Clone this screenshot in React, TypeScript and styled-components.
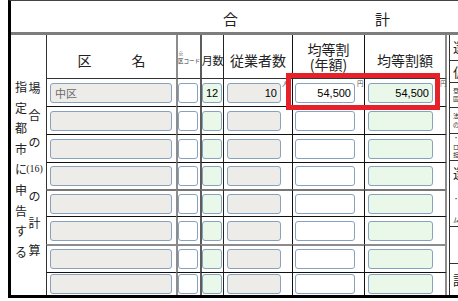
import React from "react";
import styled, { createGlobalStyle } from "styled-components";

const CJK = `"Noto Sans CJK JP", "Noto Sans", sans-serif`;
const NUM = `"Liberation Sans", "Noto Sans CJK JP", sans-serif`;

const GlobalStyle = createGlobalStyle`
  html, body {
    margin: 0;
    padding: 0;
    background: #fff;
    overflow: hidden;
  }
  body {
    font-family: ${CJK};
    color: #222;
  }
  * {
    box-sizing: border-box;
  }
`;

type Fill = "gray" | "white" | "green";

const fills: Record<Fill, string> = {
  gray: "#edece9",
  white: "#ffffff",
  green: "#e9f8e9",
};

// vertical rules, one per column of the table (left column excluded)
const columns = [
  { key: "name", left: "1px solid #333", pad: 3, width: 122, fill: "gray" as Fill },
  { key: "code", left: "2px solid #8c8c8c", pad: 0, width: 20, fill: "white" as Fill },
  { key: "month", left: "2px solid #5c5c5c", pad: 0, width: 20, fill: "green" as Fill },
  { key: "emp", left: "1px solid #222", pad: 3, width: 54, fill: "gray" as Fill },
  { key: "kintou", left: "1px solid #111", pad: 2, width: 60, fill: "white" as Fill },
  { key: "gaku", left: "1px solid #111", pad: 3, width: 65, fill: "green" as Fill },
];

const rowLines = [
  "1px solid #333",
  "1px solid #111",
  "1px solid #111",
  "1px solid #111",
  "2px solid #777",
  "1px solid #111",
  "2px solid #8c8c8c",
  "1px solid #111",
];

const firstRow: Record<string, string> = {
  name: "中区",
  code: "",
  month: "12",
  emp: "10",
  kintou: "54,500",
  gaku: "54,500",
};

const units: Record<string, { text: string; gap: number }> = {
  emp: { text: "人", gap: 1 },
  kintou: { text: "円", gap: 2 },
  gaku: { text: "円", gap: 7 },
};

export default function App() {
  return (
    <Page>
      <GlobalStyle />
      <Frame>
        <TitleRow>
          <span>合</span>
          <span>計</span>
        </TitleRow>
        <Body>
          <Grid>
            <Lead>
              <LeadMain>
                {"指定都市に申告する".split("").map((c, i) => (
                  <span key={i}>{c}</span>
                ))}
              </LeadMain>
              <LeadSub>
                <span>場</span>
                <span>合</span>
                <span>の</span>
                <LeadSmall>(16)</LeadSmall>
                <span>の</span>
                <span>計</span>
                <span>算</span>
              </LeadSub>
            </Lead>

            <HeadCell $left={columns[0].left}>
              <NameHead>
                <span>区</span>
                <span>名</span>
              </NameHead>
            </HeadCell>
            <HeadCell $left={columns[1].left}>
              <CodeHead>
                <span>※</span>
                <span>区コード</span>
              </CodeHead>
            </HeadCell>
            <HeadCell $left={columns[2].left}>
              <MonthHead>月数</MonthHead>
            </HeadCell>
            <HeadCell $left={columns[3].left}>従業者数</HeadCell>
            <HeadCell $left={columns[4].left} $twoLines>
              <HeadLine>均等割</HeadLine>
              <HeadLine>(年額)</HeadLine>
            </HeadCell>
            <HeadCell $left={columns[5].left} $right="2px solid #8c8c8c">
              均等割額
            </HeadCell>

            {rowLines.map((top, r) =>
              columns.map((col) => {
                const value = r === 0 ? firstRow[col.key] : "";
                const unit = r === 0 ? units[col.key] : undefined;
                return (
                  <Cell
                    key={`${r}-${col.key}`}
                    $left={col.left}
                    $top={top}
                    $pad={col.pad}
                    $right={col.key === "gaku" ? "2px solid #8c8c8c" : undefined}
                  >
                    {col.key === "name" ? (
                      <NameField readOnly value={value} $w={col.width} $fill={col.fill} />
                    ) : (
                      <Field readOnly value={value} $w={col.width} $fill={col.fill} />
                    )}
                    {unit && <Unit $gap={unit.gap}>{unit.text}</Unit>}
                  </Cell>
                );
              })
            )}
          </Grid>

          <Side>
            <SideCell $first $top>還付</SideCell>
            <SideCell>仮装</SideCell>
            <SideCell $small>
              <span>登録</span>
              <span>固定</span>
            </SideCell>
            <SideCell $small>
              <span>法人</span>
              <span>の</span>
            </SideCell>
            <SideCell $small>
              <span>・</span>
              <span>ロ</span>
              <span>担</span>
            </SideCell>
            <SideCell $top>
              <span>還</span>
              <SideTiny>・</SideTiny>
              <SideTiny>ム</SideTiny>
            </SideCell>
            <SideCell />
            <SideCell>計</SideCell>
          </Side>
        </Body>
      </Frame>
      <Highlight />
    </Page>
  );
}

const Page = styled.div`
  position: relative;
  width: 458px;
  height: 301px;
  overflow: hidden;
`;

const Frame = styled.div`
  margin-left: 8px;
  width: 470px;
  border-top: 1px solid #444;
  border-left: 3px solid #000;
  border-bottom: 3px solid #000;
`;

const TitleRow = styled.div`
  height: 34px;
  display: flex;
  align-items: center;
  gap: 137px;
  padding: 3px 0 0 212px;
  border-bottom: 3px solid #7d7d7d;
  font-size: 15px;
  line-height: 15px;
  color: #222;
`;

const Body = styled.div`
  display: flex;
  height: 260px;
`;

const Grid = styled.div`
  display: grid;
  width: 436px;
  grid-template-columns: 35px 130px 24px 23px 69px 72px 83px;
  grid-template-rows: 43px 28px 28px 28px 27px 27px 28px 28px 23px;
`;

const Lead = styled.div`
  grid-row: 1 / -1;
  grid-column: 1;
  display: flex;
  align-items: flex-start;
  padding: 42px 0 0 4px;
  font-size: 12px;
  color: #222;
`;

const LeadMain = styled.div`
  display: flex;
  flex-direction: column;
  width: 12px;
  line-height: 20.6px;
  text-align: center;
`;

const LeadSub = styled.div`
  display: flex;
  flex-direction: column;
  justify-content: space-between;
  align-items: center;
  width: 13px;
  height: 178px;
  margin: 3px 0 0 1px;
  line-height: 16px;
`;

const LeadSmall = styled.span`
  font-family: "Liberation Serif", serif;
  font-size: 10px;
  white-space: nowrap;
`;

const HeadCell = styled.div<{ $left: string; $right?: string; $twoLines?: boolean }>`
  display: flex;
  flex-direction: ${(p) => (p.$twoLines ? "column" : "row")};
  align-items: center;
  justify-content: center;
  padding-top: ${(p) => (p.$twoLines ? 0 : 6)}px;
  border-left: ${(p) => p.$left};
  border-right: ${(p) => p.$right ?? "none"};
  font-size: 14px;
  line-height: 16px;
  white-space: nowrap;
  color: #222;
`;

const HeadLine = styled.span`
  display: block;
  height: 14.5px;
  line-height: 14.5px;
`;

const NameHead = styled.div`
  display: flex;
  gap: 40px;
`;

const CodeHead = styled.div`
  align-self: flex-start;
  display: flex;
  flex-direction: column;
  margin-top: 10px;
  width: 100%;
  font-size: 5.5px;
  line-height: 7px;
  color: #333;
`;

const MonthHead = styled.span`
  font-size: 11px;
  letter-spacing: -0.3px;
`;

const Cell = styled.div<{ $left: string; $top: string; $pad: number; $right?: string }>`
  display: flex;
  align-items: center;
  padding-left: ${(p) => p.$pad}px;
  border-left: ${(p) => p.$left};
  border-top: ${(p) => p.$top};
  border-right: ${(p) => p.$right ?? "none"};
  min-width: 0;
`;

const Field = styled.input<{ $w: number; $fill: Fill }>`
  flex: none;
  width: ${(p) => p.$w}px;
  height: 20px;
  margin: 0;
  padding: 0 3px 0 3px;
  border: 1px solid #86a2bf;
  border-radius: 3px;
  background: ${(p) => fills[p.$fill]};
  font-family: ${NUM};
  font-size: 11px;
  color: #000;
  text-align: right;
  outline: none;
`;

const NameField = styled(Field)`
  padding-left: 4px;
  font-family: ${CJK};
  color: #6b6b6b;
  text-align: left;
`;

const Unit = styled.span<{ $gap: number }>`
  align-self: flex-start;
  margin: 1px 0 0 ${(p) => p.$gap}px;
  font-size: 6.5px;
  line-height: 7px;
  color: #555;
`;

const Side = styled.div`
  flex: 1;
  min-width: 20px;
  margin-left: 2px;
  border-left: 1px solid #333;
  display: grid;
  grid-template-rows: 25px 22px 25px 26px 27px 66px 37px 32px;
`;

const SideCell = styled.div<{ $first?: boolean; $small?: boolean; $top?: boolean }>`
  display: flex;
  flex-direction: column;
  justify-content: ${(p) => (p.$top ? "flex-start" : "center")};
  padding: ${(p) => (p.$top ? "2px 0 0 3px" : "0 0 0 3px")};
  border-top: ${(p) => (p.$first ? "none" : "1px solid #333")};
  font-size: ${(p) => (p.$small ? 6 : 13)}px;
  line-height: ${(p) => (p.$small ? 8.5 : 19)}px;
  white-space: nowrap;
  overflow: hidden;
  color: #222;
`;

const SideTiny = styled.span`
  margin-top: 12px;
  font-size: 6px;
  line-height: 9px;
`;

const Highlight = styled.div`
  position: absolute;
  left: 286px;
  top: 73px;
  width: 154px;
  height: 37px;
  border: 5px solid #e6212a;
  pointer-events: none;
`;
